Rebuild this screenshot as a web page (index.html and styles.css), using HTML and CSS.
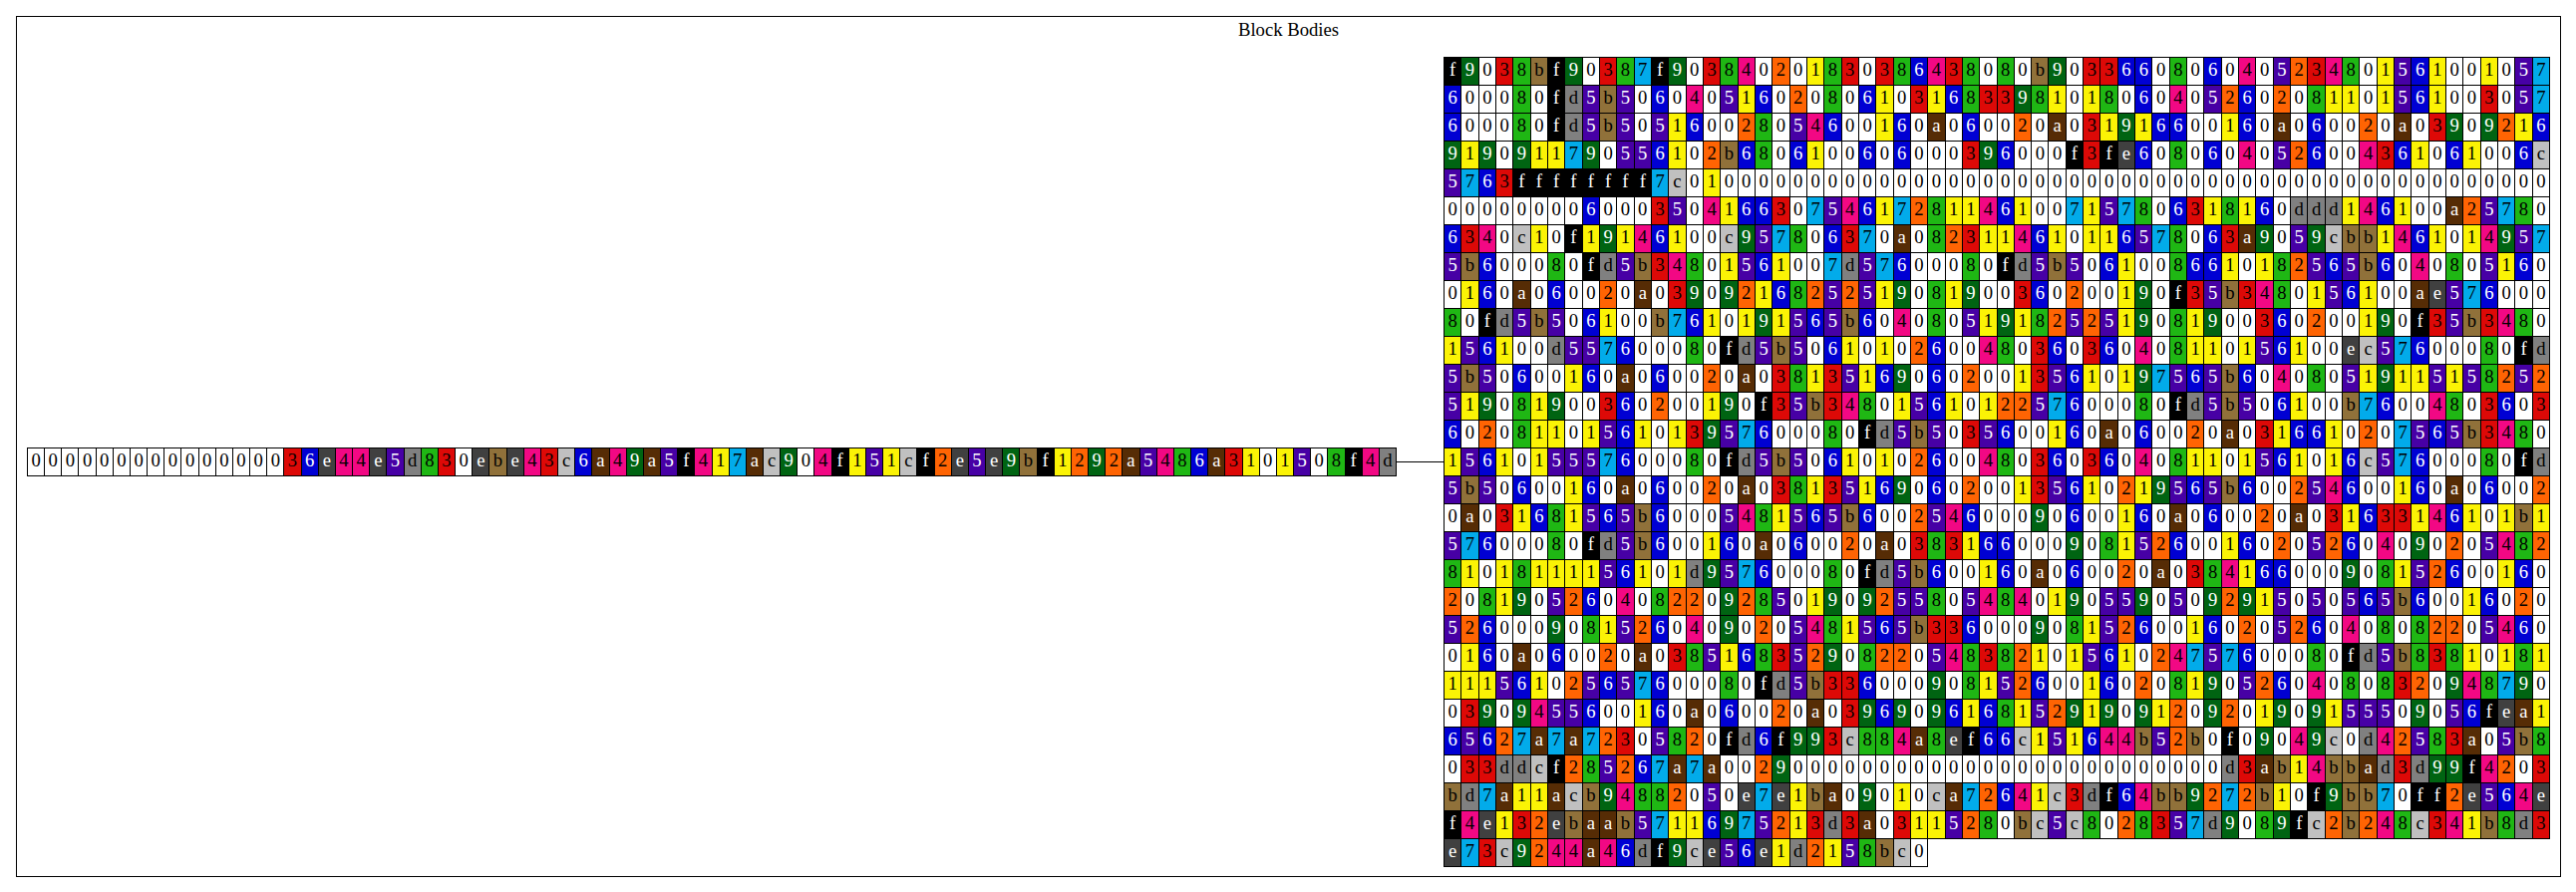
FILE: index.html
```html
<!DOCTYPE html>
<html lang="en">
<head>
<meta charset="utf-8">
<title>Block Bodies</title>
<link rel="stylesheet" href="styles.css">
</head>
<body>
<section class="cluster">
  <h1 class="title">Block Bodies</h1>
  <div class="flow">
    <div class="record" id="hash"></div>
    <div class="edge"></div>
    <div class="body" id="body"></div>
  </div>
</section>
<script src="script.js"></script>
</body>
</html>
```
FILE: styles.css
```css
* { box-sizing: border-box; }
html, body { margin: 0; background: #fff; }
body { padding: 16px 0 0 16px; font-family: "Liberation Serif", "Times New Roman", serif; }
.cluster { width: 2553px; height: 864px; border: 1px solid #000; padding: 0 10px 9px; display: flex; flex-direction: column; }
.title { margin: 0; height: 40px; padding-bottom: 14px; font-size: 18.67px; font-weight: normal; line-height: 26px; text-align: center; color: #000; }
.flow { display: flex; align-items: center; }
.record { width: 1374px; height: 29px; padding: 0 1px 1px 0; display: grid; grid-template-columns: repeat(80, 1fr); grid-auto-rows: 28px; flex: none; }
.edge { flex: 1; height: 1px; background: #000; }
.body { width: 1110px; height: 813px; padding: 0 1px 1px 0; display: grid; grid-template-columns: repeat(64, 1fr); grid-auto-rows: 28px; flex: none; }
.cell { border: 1px solid #000; margin: 0 -1px -1px 0; font-size: 18.67px; line-height: 24px; text-align: center; color: #000; }
.h0 { background: #fff; }
.h1 { background: #fbf305; }
.h2 { background: #ff6403; }
.h3 { background: #dd0907; }
.h4 { background: #f20884; }
.h5 { background: #4700a5; color: #fff; }
.h6 { background: #0000d3; color: #fff; }
.h7 { background: #02abea; }
.h8 { background: #1fb714; }
.h9 { background: #006412; color: #fff; }
.ha { background: #562c05; color: #fff; }
.hb { background: #90713a; }
.hc { background: #c0c0c0; }
.hd { background: #808080; }
.he { background: #404040; color: #fff; }
.hf { background: #000; color: #fff; }
```
FILE: script.js
```js
var hash = "000000000000000 36e44e5d830eb e43c6a49a5f417ac904f151cf2e5 e9bf1292a5486a3101508f4d";
var rows = [
  "f9038bf903 87f9038402 0183038643 80 80b9033660 8060405234 8015610010 57",
  "600080fd5b 5060405160 2080610316 83 3981018060 4052602081 1015610030 57",
  "600080fd5b 5051600280 54600160a0 60 020a031916 600160a060 020a039092 16",
  "9190911790 556102b680 6100606000 39 6000f3fe60 8060405260 0436106100 6c",
  "5763ffffff ff7c010000 0000000000 00 0000000000 0000000000 0000000000 00",
  "0000000060 0035041663 0754617281 14 6100715780 6318160ddd 146100a257 80",
  "6340c10f19 146100c957 806370a082 31 1461011657 8063a9059c bb14610149 57",
  "5b600080fd 5b34801561 007d576000 80 fd5b506100 8661018256 5b60408051 60",
  "0160a06002 0a03909216 8252519081 90 0360200190 f35b348015 6100ae5760 00",
  "80fd5b5061 00b7610191 565b604080 51 9182525190 8190036020 0190f35b34 80",
  "156100d557 600080fd5b 5061010260 04 8036036040 8110156100 ec57600080 fd",
  "5b50600160 a060020a03 8135169060 20 0135610197 565b604080 5191151582 52",
  "5190819003 60200190f3 5b34801561 01 2257600080 fd5b506100 b760048036 03",
  "6020811015 6101395760 0080fd5b50 35 600160a060 020a031661 0207565b34 80",
  "1561015557 600080fd5b 5061010260 04 8036036040 8110156101 6c57600080 fd",
  "5b50600160 a060020a03 8135169060 20 0135610219 565b600254 600160a060 02",
  "0a03168156 5b60005481 565b600254 60 0090600160 a060020a03 1633146101 b1",
  "57600080fd 5b600160a0 60020a0383 16 6000908152 6001602052 6040902054 82",
  "8101811115 6101d95760 0080fd5b60 01 60a060020a 0384166000 9081526001 60",
  "2081905260 4082209285 0190925580 54 8401905590 5092915050 565b600160 20",
  "5260009081 5260409020 5481565b33 60 0090815260 0160205260 4080822054 60",
  "0160a06002 0a03851683 5290822054 83 8210156102 4757600080 fd5b838101 81",
  "1115610256 57600080fd 5b33600090 81 5260016020 8190526040 8083209487 90",
  "0390945560 0160a06002 0a03969096 16 8152919091 2092019091 55509056fe a1",
  "65627a7a72 305820fd6f 993c884a8e f6 6c151644b5 2b0f09049c 0d42583a05 b8",
  "033ddcf285 267a7a0029 0000000000 00 0000000000 000d3ab14b bad3d99f42 03",
  "bd7a11acb9 4882050e7e 1ba09010ca 72 641c3df64b b9272b10f9 bb70ff2e56 4e",
  "f4e132ebaa b571169752 13d3a03115 28 0bc5c80283 57d9089fc2 b248c341b8 d3",
  "e73c9244a4 6df9ce56e1 d2158bc0"
];

function fill(id, text) {
  var host = document.getElementById(id);
  text.replace(/ /g, "").split("").forEach(function (ch) {
    var cell = document.createElement("div");
    cell.className = "cell h" + ch;
    cell.textContent = ch;
    host.appendChild(cell);
  });
}

fill("hash", hash);
fill("body", rows.join(""));
```
